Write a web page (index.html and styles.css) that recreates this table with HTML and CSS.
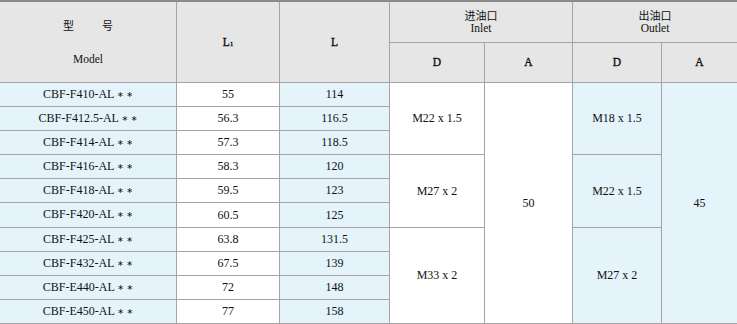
FILE: index.html
```html
<!DOCTYPE html>
<html lang="zh">
<head>
<meta charset="utf-8">
<title>CBF-F4 规格表</title>
<link rel="stylesheet" href="styles.css">
</head>
<body>
<div class="spec">
  <div class="c hd h-model"><span class="zh pair"><span>型</span><span>号</span></span><span>Model</span></div>
  <div class="c hd hv h-l1"><span>L<sub>1</sub></span></div>
  <div class="c hd hv h-l">L</div>
  <div class="c hd h-in"><span class="zh">进油口</span><span>Inlet</span></div>
  <div class="c hd h-out"><span class="zh">出油口</span><span>Outlet</span></div>
  <div class="c hd hv h-d1">D</div>
  <div class="c hd hv h-a1">A</div>
  <div class="c hd hv h-d2">D</div>
  <div class="c hd hv h-a2">A</div>

  <div class="c w in-d1">M22 x 1.5</div>
  <div class="c w in-d2">M27 x 2</div>
  <div class="c w in-d3">M33 x 2</div>
  <div class="c w in-a">50</div>
  <div class="c bl out-d1">M18 x 1.5</div>
  <div class="c bl out-d2">M22 x 1.5</div>
  <div class="c bl out-d3">M27 x 2</div>
  <div class="c bl out-a">45</div>

  <div class="c bl"><span>CBF-F410-AL <span class="st">∗ ∗</span></span></div><div class="c w">55</div><div class="c bl">114</div>
  <div class="c bl"><span>CBF-F412.5-AL <span class="st">∗ ∗</span></span></div><div class="c w">56.3</div><div class="c bl">116.5</div>
  <div class="c bl"><span>CBF-F414-AL <span class="st">∗ ∗</span></span></div><div class="c w">57.3</div><div class="c bl">118.5</div>
  <div class="c bl"><span>CBF-F416-AL <span class="st">∗ ∗</span></span></div><div class="c w">58.3</div><div class="c bl">120</div>
  <div class="c bl"><span>CBF-F418-AL <span class="st">∗ ∗</span></span></div><div class="c w">59.5</div><div class="c bl">123</div>
  <div class="c bl"><span>CBF-F420-AL <span class="st">∗ ∗</span></span></div><div class="c w">60.5</div><div class="c bl">125</div>
  <div class="c bl"><span>CBF-F425-AL <span class="st">∗ ∗</span></span></div><div class="c w">63.8</div><div class="c bl">131.5</div>
  <div class="c bl"><span>CBF-F432-AL <span class="st">∗ ∗</span></span></div><div class="c w">67.5</div><div class="c bl">139</div>
  <div class="c bl"><span>CBF-E440-AL <span class="st">∗ ∗</span></span></div><div class="c w">72</div><div class="c bl">148</div>
  <div class="c bl"><span>CBF-E450-AL <span class="st">∗ ∗</span></span></div><div class="c w">77</div><div class="c bl">158</div>
</div>
</body>
</html>
```
FILE: styles.css
```css
html, body {
  margin: 0;
  padding: 0;
  background: #ffffff;
}

body {
  font-family: "Liberation Serif", "Noto Sans CJK SC", serif;
  color: #111111;
  font-size: 12px;
}

.spec {
  width: 737px;
  display: grid;
  grid-template-columns: 176px 102px 109px 94px 87px 88px 1fr;
  grid-template-rows: 40px 39px repeat(5, 23px) 24px repeat(4, 23px);
  gap: 1px;
  background: #a4a4a4;
  border-top: 2px solid #8a8a8a;
  padding-bottom: 1px;
}

.c {
  display: flex;
  flex-direction: column;
  align-items: center;
  justify-content: center;
  text-align: center;
  line-height: 13px;
  white-space: nowrap;
}

.hd {
  background: #e6e6e6;
  font-size: 11.5px;
}

.hv {
  -webkit-text-stroke: 0.35px #111111;
}

.w { background: #ffffff; }
.bl { background: #e5f4fa; }

.zh {
  font-family: "Noto Sans CJK SC", sans-serif;
  font-size: 11px;
  line-height: 12px;
}

.pair {
  display: flex;
  gap: 28px;
}

.st {
  font-family: "DejaVu Sans", sans-serif;
  font-size: 8px;
  position: relative;
  top: -1px;
}

sub {
  font-size: 6.5px;
  line-height: 0;
  vertical-align: baseline;
}

.h-model { grid-column: 1; grid-row: 1 / span 2; gap: 22px; }
.h-l1 { grid-column: 2; grid-row: 1 / span 2; }
.h-l { grid-column: 3; grid-row: 1 / span 2; }
.h-in { grid-column: 4 / span 2; grid-row: 1; gap: 1px; }
.h-out { grid-column: 6 / span 2; grid-row: 1; gap: 1px; }
.h-d1 { grid-column: 4; grid-row: 2; }
.h-a1 { grid-column: 5; grid-row: 2; }
.h-d2 { grid-column: 6; grid-row: 2; }
.h-a2 { grid-column: 7; grid-row: 2; }

.in-d1 { grid-column: 4; grid-row: 3 / span 3; }
.in-d2 { grid-column: 4; grid-row: 6 / span 3; }
.in-d3 { grid-column: 4; grid-row: 9 / span 4; }
.in-a { grid-column: 5; grid-row: 3 / span 10; }
.out-d1 { grid-column: 6; grid-row: 3 / span 3; }
.out-d2 { grid-column: 6; grid-row: 6 / span 3; }
.out-d3 { grid-column: 6; grid-row: 9 / span 4; }
.out-a { grid-column: 7; grid-row: 3 / span 10; }
```
